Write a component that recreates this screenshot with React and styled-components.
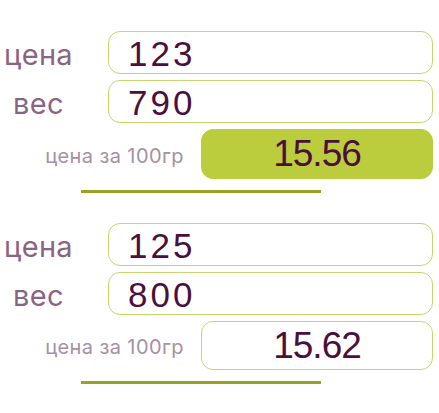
import styled, { createGlobalStyle } from 'styled-components'

const GlobalStyle = createGlobalStyle`
  body {
    margin: 0;
    background: #ffffff;
    font-family: "Liberation Sans", Arial, sans-serif;
  }
`;

const Page = styled.div`
  display: flex;
  flex-direction: column;
  gap: 30px;
  width: 439px;
  padding: 31px 6px 0 0;
  box-sizing: border-box;
`;

const Block = styled.div`
  display: flex;
  flex-direction: column;
  gap: 6px;
`;

const Row = styled.div`
  display: flex;
  align-items: center;
  gap: 31px;
`;

const Label = styled.span`
  width: 77px;
  text-align: center;
  font-family: Inter, "Liberation Sans", sans-serif;
  font-size: 29px;
  letter-spacing: 0.3px;
  color: #8a6483;
  margin-top: 3px;
`;

const Field = styled.input`
  flex: 1;
  min-width: 0;
  height: 43px;
  box-sizing: border-box;
  border: 1.5px solid #c6d56a;
  border-radius: 12px;
  padding: 3px 0 0 19px;
  font-family: "Liberation Sans", Arial, sans-serif;
  font-size: 35px;
  letter-spacing: 3px;
  color: #4a0f3d;
  background: #fff;
  :focus {
    outline: none;
  }
`;

const ResultRow = styled.div`
  display: flex;
  align-items: center;
  justify-content: flex-end;
  gap: 17px;
`;

const SmallLabel = styled.span`
  font-family: Inter, "Liberation Sans", sans-serif;
  font-size: 20px;
  letter-spacing: 0.4px;
  color: #a690a2;
  margin-top: 3px;
`;

const Result = styled.div`
  width: 232px;
  height: ${p => (p.$filled ? '50px' : '49px')};
  box-sizing: border-box;
  display: flex;
  align-items: center;
  justify-content: center;
  border-radius: 12px;
  border: 1.5px solid ${p => (p.$filled ? '#bbcc3c' : '#c6d56a')};
  background: ${p => (p.$filled ? '#bbcc3c' : '#fff')};
  font-size: 37px;
  letter-spacing: -1px;
  color: #4a0f3d;
`;

const Underline = styled.div`
  width: 240px;
  height: 3px;
  margin: 5px 0 0 81px;
  background: #97a324;
`;

const items = [
  { price: '123', weight: '790', result: '15.56', filled: true },
  { price: '125', weight: '800', result: '15.62', filled: false },
];

function App() {
  return (
    <>
      <GlobalStyle />
      <Page>
        {items.map((item, i) => (
          <Block key={i}>
            <Row>
              <Label>цена</Label>
              <Field defaultValue={item.price} />
            </Row>
            <Row>
              <Label>вес</Label>
              <Field defaultValue={item.weight} />
            </Row>
            <ResultRow>
              <SmallLabel>цена за 100гр</SmallLabel>
              <Result $filled={item.filled}>{item.result}</Result>
            </ResultRow>
            <Underline />
          </Block>
        ))}
      </Page>
    </>
  )
}

export default App
